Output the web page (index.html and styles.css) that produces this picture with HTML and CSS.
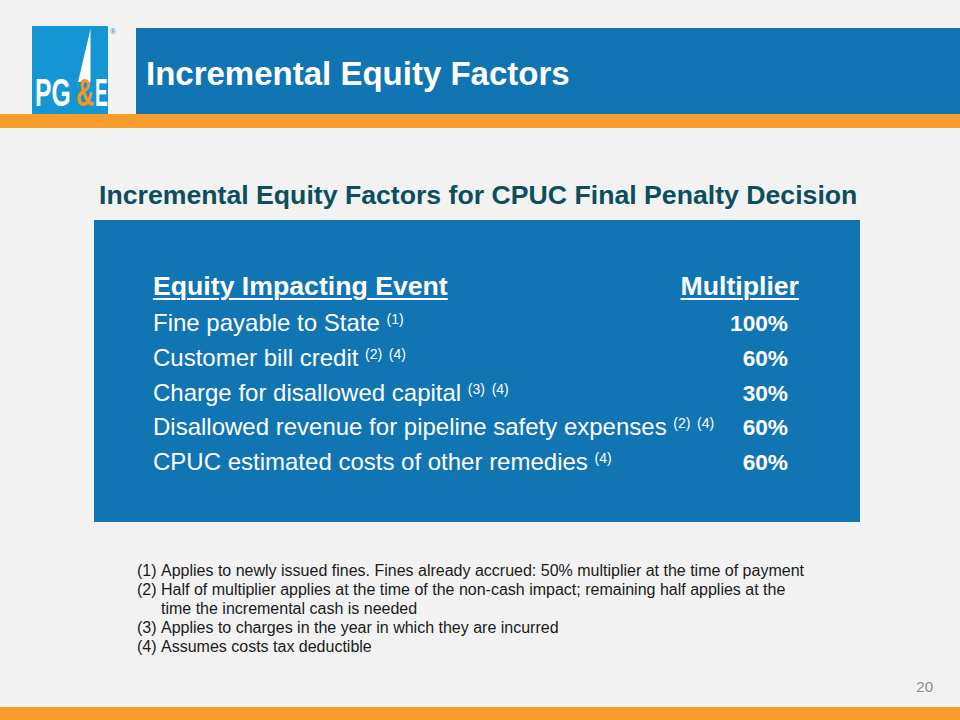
FILE: index.html
```html
<!DOCTYPE html>
<html lang="en">
<head>
<meta charset="utf-8">
<title>Incremental Equity Factors</title>
<link rel="stylesheet" href="styles.css">
</head>
<body>
<header class="top">
  <svg class="logo" width="88" height="88" viewBox="0 0 88 88" aria-label="PG&amp;E">
    <rect x="0" y="0" width="76" height="88" fill="#1596d4"/>
    <polygon points="58.5,3 58.5,56 46,56" fill="#ffffff"/>
    <text class="logo-letters" transform="translate(3,80) scale(0.65,1)" font-size="38" fill="#ffffff">PG</text>
    <text class="logo-letters" transform="translate(44,80) scale(0.66,1)" font-size="38" fill="#f7941d">&amp;</text>
    <text class="logo-letters" transform="translate(63,80) scale(0.5,1)" font-size="38" fill="#ffffff">E</text>
    <text class="logo-reg" x="78" y="8" font-size="8" fill="#3d78a8">®</text>
  </svg>
  <div class="titlebar"><h1 class="title">Incremental Equity Factors</h1></div>
</header>
<div class="rule"></div>
<main class="content">
  <h2 class="subtitle">Incremental Equity Factors for CPUC Final Penalty Decision</h2>
  <section class="panel">
    <div class="row head"><span class="ul">Equity Impacting Event</span><span class="ul mult">Multiplier</span></div>
    <div class="row"><span>Fine payable to State <sup>(1)</sup></span><span class="pct">100%</span></div>
    <div class="row"><span>Customer bill credit <sup>(2)</sup> <sup>(4)</sup></span><span class="pct">60%</span></div>
    <div class="row"><span>Charge for disallowed capital <sup>(3)</sup> <sup>(4)</sup></span><span class="pct">30%</span></div>
    <div class="row"><span>Disallowed revenue for pipeline safety expenses <sup>(2)</sup> <sup>(4)</sup></span><span class="pct">60%</span></div>
    <div class="row"><span>CPUC estimated costs of other remedies <sup>(4)</sup></span><span class="pct">60%</span></div>
  </section>
  <ol class="notes">
    <li><span class="num">(1)</span><span>Applies to newly issued fines. Fines already accrued: 50% multiplier at the time of payment</span></li>
    <li><span class="num">(2)</span><span>Half of multiplier applies at the time of the non-cash impact; remaining half applies at the time the incremental cash is needed</span></li>
    <li><span class="num">(3)</span><span>Applies to charges in the year in which they are incurred</span></li>
    <li><span class="num">(4)</span><span>Assumes costs tax deductible</span></li>
  </ol>
  <div class="pagenum">20</div>
</main>
<div class="bottom"></div>
</body>
</html>
```
FILE: styles.css
```css
html, body {
  margin: 0;
  padding: 0;
}
body {
  width: 960px;
  height: 720px;
  overflow: hidden;
  background: #f2f2f2;
  font-family: "Liberation Sans", Arial, sans-serif;
  color: #1a1a1a;
}
.top {
  display: flex;
  padding-top: 26px;
  height: 88px;
}
.logo {
  display: block;
  margin-left: 32px;
  flex: none;
}
.logo-letters {
  font-family: "Liberation Sans", Arial, sans-serif;
  font-weight: bold;
}
.logo-reg {
  font-family: "Liberation Sans", Arial, sans-serif;
}
.titlebar {
  flex: 1;
  margin-left: 16px;
  margin-top: 2px;
  height: 86px;
  background: #1174b3;
  box-sizing: border-box;
  padding: 26px 0 0 10px;
}
.title {
  margin: 0;
  font-size: 33px;
  line-height: 40px;
  font-weight: bold;
  color: #ffffff;
}
.rule {
  height: 14px;
  background: #f89c2b;
}
.content {
  height: 579px;
  display: flex;
  flex-direction: column;
}
.subtitle {
  margin: 51px 0 0 99px;
  font-size: 26.67px;
  line-height: 32px;
  font-weight: bold;
  color: #0d4e5c;
}
.panel {
  margin: 9px 0 0 94px;
  width: 766px;
  height: 302px;
  box-sizing: border-box;
  padding: 47px 72px 0 59px;
  background: #1174b3;
  color: #ffffff;
}
.row {
  display: flex;
  justify-content: space-between;
  align-items: baseline;
  font-size: 24px;
  line-height: 34.8px;
}
.row.head {
  font-size: 26.67px;
  line-height: 38px;
  font-weight: bold;
  margin-bottom: 1px;
}
.ul {
  text-decoration: underline;
  text-decoration-thickness: 2px;
  text-underline-offset: 3px;
}
.mult {
  margin-right: -11px;
}
.pct {
  font-weight: bold;
  font-size: 22.67px;
}
sup {
  font-size: 14px;
  line-height: 0;
  vertical-align: 7px;
}
.notes {
  list-style: none;
  margin: 39px 0 0 0;
  padding: 0 0 0 137px;
  font-size: 16px;
  line-height: 19px;
  color: #1a1a1a;
}
.notes li {
  display: grid;
  grid-template-columns: 24px 1fr;
  width: 690px;
}
.notes li:nth-child(2) {
  width: 670px;
}
.pagenum {
  margin-top: auto;
  margin-bottom: 11px;
  padding-right: 27px;
  text-align: right;
  font-size: 15px;
  line-height: 18px;
  color: #8c8c8c;
}
.bottom {
  height: 13px;
  background: #f89c2b;
}
```
